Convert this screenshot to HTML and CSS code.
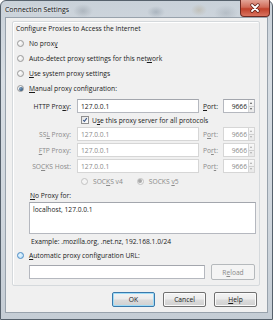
FILE: index.html
```html
<!DOCTYPE html>
<html lang="en">
  <head>
    <meta charset="UTF-8" />
    <title>Connection Settings</title>
    <link rel="stylesheet" href="styles.css">
  </head>
  <body>
    <div class="window">
      <div class="titlebar">
        <span class="title">Connection Settings</span>
        <span class="close">
          <svg width="12" height="10" viewBox="0 0 12 10">
            <path d="M3 2 L9 8 M9 2 L3 8" stroke="#5a1d16" stroke-width="3.2" stroke-linecap="round" />
            <path d="M3 2 L9 8 M9 2 L3 8" stroke="#fff" stroke-width="1.8" stroke-linecap="round" />
          </svg>
        </span>
      </div>

      <div class="client">
        <div class="group">
          <div class="caption">Configure Proxies to Access the Internet</div>

          <div class="radio-row"><span class="radio"></span><span>No prox<u>y</u></span></div>
          <div class="radio-row"><span class="radio"></span><span>Auto-detect proxy settings for this net<u>w</u>ork</span></div>
          <div class="radio-row"><span class="radio"></span><span><u>U</u>se system proxy settings</span></div>
          <div class="radio-row"><span class="radio checked"></span><span><u>M</u>anual proxy configuration:</span></div>

          <div class="proxy-grid">
            <span class="field-label">HTTP Pro<u>x</u>y:</span>
            <span class="input"><span class="value">127.0.0.1</span></span>
            <span class="port-label"><u>P</u>ort:</span>
            <span class="port"><span class="value">9666</span><span class="spin"></span></span>

            <div class="check-row"><span class="checkbox">
              <svg width="8" height="8" viewBox="0 0 8 8"><path d="M1.6 4 L3.2 5.8 L6.4 1.6" fill="none" stroke="#3d5a8a" stroke-width="1.5" /></svg>
            </span><span>U<u>s</u>e this proxy server for all protocols</span></div>

            <span class="field-label off">SS<u>L</u> Proxy:</span>
            <span class="input off"><span class="value">127.0.0.1</span></span>
            <span class="port-label off">P<u>o</u>rt:</span>
            <span class="port off"><span class="value">9666</span><span class="spin"></span></span>

            <span class="field-label off"><u>F</u>TP Proxy:</span>
            <span class="input off"><span class="value">127.0.0.1</span></span>
            <span class="port-label off">Po<u>r</u>t:</span>
            <span class="port off"><span class="value">9666</span><span class="spin"></span></span>

            <span class="field-label off">SO<u>C</u>KS Host:</span>
            <span class="input off"><span class="value">127.0.0.1</span></span>
            <span class="port-label off">Por<u>t</u>:</span>
            <span class="port off"><span class="value">9666</span><span class="spin"></span></span>

            <div class="socks-row off">
              <span class="radio-row"><span class="radio off"></span><span>SOC<u>K</u>S v4</span></span>
              <span class="radio-row"><span class="radio checked off"></span><span>SOCKS <u>v</u>5</span></span>
            </div>
          </div>

          <div class="noproxy-label"><u>N</u>o Proxy for:</div>
          <div class="textarea">localhost, 127.0.0.1</div>
          <div class="example">Example: .mozilla.org, .net.nz, 192.168.1.0/24</div>

          <div class="radio-row"><span class="radio hover"></span><span><u>A</u>utomatic proxy configuration URL:</span></div>
          <div class="url-row">
            <span class="input url"></span>
            <span class="btn disabled"><span>R<u>e</u>load</span></span>
          </div>
        </div>

        <div class="buttons">
          <span class="btn default">OK</span>
          <span class="btn">Cancel</span>
          <span class="btn"><span><u>H</u>elp</span></span>
        </div>
      </div>
    </div>
  </body>
</html>
```

FILE: styles.css
```css
* {
  box-sizing: border-box;
}

body {
  margin: 0;
  font-family: "Open Sans", "Liberation Sans", sans-serif;
  font-size: 6.7px;
  color: #1a1a1a;
}

u {
  text-decoration-thickness: 0.5px;
  text-underline-offset: 1px;
}

.window {
  width: 273px;
  height: 320px;
  display: flex;
  flex-direction: column;
  padding: 0 4px 6px 4px;
  border: 1px solid #56616c;
  border-radius: 6px 6px 0 0;
  background: linear-gradient(#c9d1d9, #d8dee4 25%, #cfd6dd 70%, #c5cdd5);
}

.titlebar {
  height: 17px;
  margin: 0 -4px;
  padding: 0 4px;
  display: flex;
  justify-content: space-between;
  align-items: flex-start;
  background:
    radial-gradient(ellipse 10px 7px at 82px 10px, rgba(120, 130, 140, 0.35), transparent),
    radial-gradient(ellipse 9px 6px at 155px 11px, rgba(110, 125, 140, 0.35), transparent),
    radial-gradient(ellipse 8px 6px at 198px 9px, rgba(170, 150, 110, 0.3), transparent),
    radial-gradient(ellipse 12px 8px at 225px 12px, rgba(130, 140, 150, 0.3), transparent);
}

.title {
  margin-top: 4px;
  font-size: 6.9px;
  color: #111;
  text-shadow: 0 0 3px #fff;
}

.close {
  width: 30px;
  height: 17px;
  margin: -1px -2px 0 0;
  display: flex;
  align-items: center;
  justify-content: center;
  border: 1px solid #6e2a22;
  border-top: none;
  border-radius: 0 0 4px 4px;
  background: linear-gradient(#e3a497, #d06b58 45%, #c0412b 55%, #d9735f);
}

.client {
  flex: 1;
  display: flex;
  flex-direction: column;
  padding: 3px 7px 5px 6px;
  border: 1px solid #98a2ac;
  background: #f0f0f0;
}

.group {
  height: 265px;
  padding: 0 3px 0 4px;
  border: 1px solid #d5d9dc;
  border-radius: 2px;
  box-shadow: inset 1px 1px 0 #fff;
}

.caption {
  height: 10px;
  line-height: 10px;
  margin: 2px 0 2px -1px;
}

.radio-row {
  height: 15px;
  display: flex;
  align-items: center;
  gap: 5px;
}

.radio {
  width: 7px;
  height: 7px;
  border-radius: 50%;
  border: 1px solid #9a9a9a;
  background: radial-gradient(circle at 35% 35%, #fff, #dcdcdc);
  display: flex;
  align-items: center;
  justify-content: center;
  flex: none;
}

.radio.checked::after {
  content: "";
  width: 4px;
  height: 4px;
  border-radius: 50%;
  background: radial-gradient(circle at 35% 35%, #7aa0c4, #1b3b5c);
}

.radio.off {
  border-color: #c2c2c2;
  background: #f4f4f4;
}

.radio.checked.off::after {
  background: #a9a9a9;
}

.radio.hover {
  border-color: #4d8cc4;
  background: radial-gradient(circle at 40% 40%, #e9f6fe, #a9d8f7);
}

.proxy-grid {
  margin-top: 3px;
  display: grid;
  grid-template-columns: 55px 123px 16px 32px;
  column-gap: 4px;
  row-gap: 2px;
  align-items: center;
}

.field-label {
  text-align: right;
  padding-right: 1px;
}

.off {
  color: #8a8a8a;
}

.input,
.port,
.textarea {
  height: 14px;
  display: flex;
  align-items: center;
  background: #fff;
  border: 1px solid #b5b8bf;
  border-top-color: #a3a6ad;
}

.input.off,
.port.off {
  border-color: #d6d6d6;
}

.input .value {
  padding-left: 3px;
}

.proxy-grid .input {
  margin-left: 1px;
}

.port {
  justify-content: flex-end;
}

.port .value {
  padding-right: 1px;
}

.spin {
  width: 6px;
  height: 12px;
  border-left: 1px solid #d6d6d6;
  background:
    linear-gradient(#d0d0d0, #d0d0d0) center / 100% 1px no-repeat,
    linear-gradient(#f8f8f8, #e8e8e8);
  position: relative;
}

.spin::before,
.spin::after {
  content: "";
  position: absolute;
  left: 1px;
  border-left: 1.5px solid transparent;
  border-right: 1.5px solid transparent;
}

.spin::before {
  top: 2px;
  border-bottom: 2px solid #555;
}

.spin::after {
  bottom: 2px;
  border-top: 2px solid #555;
}

.off .spin::before {
  border-bottom-color: #aaa;
}

.off .spin::after {
  border-top-color: #aaa;
}

.check-row {
  grid-column: 2 / 5;
  height: 10px;
  display: flex;
  align-items: center;
  gap: 3px;
  padding-left: 5px;
}

.checkbox {
  width: 8px;
  height: 8px;
  border: 1px solid #8f8f8f;
  background: linear-gradient(135deg, #e2e2e2, #fff);
  display: flex;
  align-items: center;
  justify-content: center;
}

.checkbox svg {
  width: 6px;
  height: 6px;
}

.socks-row {
  grid-column: 2 / 5;
  height: 12px;
  display: flex;
  gap: 14px;
  padding-left: 5px;
}

.socks-row .radio-row {
  height: 12px;
}

.noproxy-label {
  height: 10px;
  line-height: 10px;
  margin: 4px 0 1px 13px;
}

.textarea {
  height: 32px;
  margin-left: 12px;
  align-items: flex-start;
  padding: 2px 3px;
}

.example {
  height: 10px;
  line-height: 10px;
  margin: 3px 0 1px 14px;
}

.url-row {
  margin-top: 1px;
  height: 16px;
  display: flex;
  align-items: center;
  gap: 6px;
  padding-left: 12px;
}

.input.url {
  width: 176px;
}

.btn {
  width: 43px;
  height: 15px;
  display: flex;
  align-items: center;
  justify-content: center;
  border: 1px solid #707070;
  border-radius: 2px;
  background: linear-gradient(#f3f3f3, #ebebeb 48%, #dcdcdc 52%, #d0d0d0);
  box-shadow: inset 0 0 0 1px #fbfbfb;
}

.btn.disabled {
  width: 44px;
  height: 16px;
  border-color: #b5b9bc;
  background: #f4f4f4;
  box-shadow: none;
  color: #8a8a8a;
}

.btn.default {
  border-color: #3a79ab;
  box-shadow: inset 0 0 0 1px #9fdcf7;
}

.buttons {
  margin-top: 6px;
  display: flex;
  justify-content: flex-end;
  gap: 8px;
  padding-right: 3px;
}
```
